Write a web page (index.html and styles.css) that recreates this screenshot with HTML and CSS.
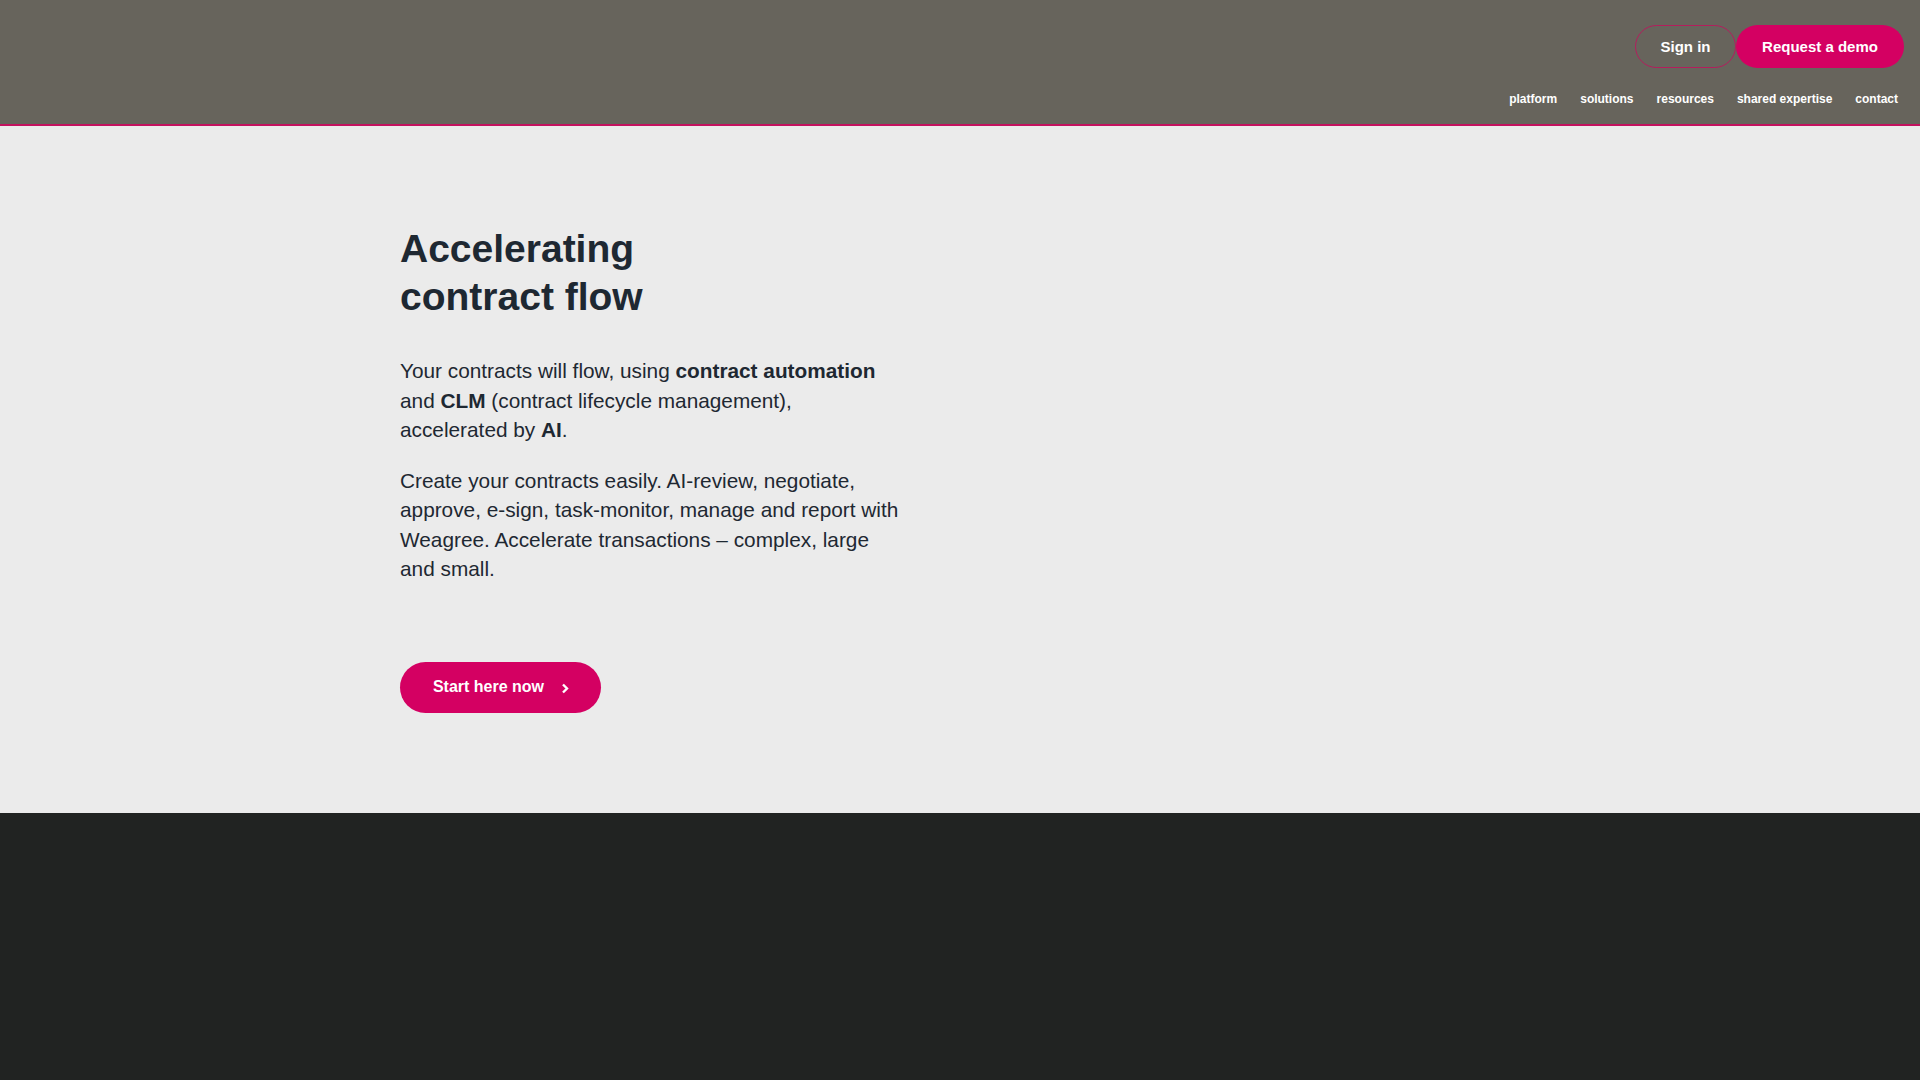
FILE: index.html
```html
<!doctype html>
<html>
<head>
<meta charset="utf-8">
<title>Weagree - Accelerating contract flow</title>
<link rel="stylesheet" href="styles.css">
</head>

<body>
<header class="site-header">
    <div class="header-actions">
        <a href="#" class="btn btn-outline">Sign in</a>
        <a href="#" class="btn btn-solid">Request a demo</a>
    </div>
    <nav class="main-nav">
        <a href="#">platform</a>
        <a href="#">solutions</a>
        <a href="#">resources</a>
        <a href="#">shared expertise</a>
        <a href="#">contact</a>
    </nav>
</header>

<section class="hero">
    <div class="constr">
        <h1 class="hero-title">Accelerating contract flow</h1>
        <div class="hero-text">
            <p>Your contracts will flow, using <strong>contract automation</strong> and <strong>CLM</strong> (contract lifecycle management), accelerated by <strong>AI</strong>.</p>
            <p>Create your contracts easily. AI-review, negotiate, approve, e-sign, task-monitor, manage and report with Weagree. Accelerate transactions – complex, large and small.</p>
        </div>
        <a href="#" class="btn btn-solid btn-start">Start here now
            <svg class="chev" width="9" height="11" viewBox="0 0 9 11"><path d="M2 1.5l4 4-4 4" fill="none" stroke="#fff" stroke-width="2.4"/></svg>
        </a>
    </div>
</section>

<section class="dark-band"></section>
</body>
</html>
```

FILE: styles.css
```css
body { margin: 0; font: 16px/1.4 "Liberation Sans", Arial, sans-serif; background-color: #ebebeb; color: #1e2832; }
a { text-decoration: none; }

/* top bar */
.site-header { height: 126px; box-sizing: border-box; padding: 25px 16px 0 0; background-color: #67645c; border-bottom: 2px solid #c4125f; display: flex; flex-direction: column; align-items: flex-end; }
.header-actions { display: flex; }
.btn { display: inline-flex; align-items: center; justify-content: center; box-sizing: border-box; height: 43px; padding: 0 20px; border-radius: 22px; font-size: 15px; font-weight: bold; color: #fff; white-space: nowrap; }
.btn-outline { width: 101px; border: 1px solid #b41d5c; }
.btn-solid { background-color: #d40062; }
.header-actions .btn-solid { width: 168px; }
.main-nav { display: flex; gap: 23px; margin-top: 24px; padding-right: 6px; }
.main-nav a { font-size: 12px; font-weight: bold; line-height: 14px; color: #fff; }

/* hero */
.hero { padding: 99px 0 100px; }
.constr { max-width: 1120px; margin: 0 auto; }
.hero-title { width: 320px; margin: 0 0 35px; font-size: 39px; line-height: 48px; font-weight: bold; }
.hero-text { width: 505px; font-size: 20.8px; line-height: 29.5px; }
.hero-text p { margin: 0 0 21px; }
.hero-text p:last-child { margin-bottom: 0; }
.btn-start { margin-top: 78px; width: 201px; height: 51px; border-radius: 26px; font-size: 16px; padding: 0 0 0 2px; }
.btn-start .chev { margin-left: 17px; margin-top: 3px; }

.dark-band { height: 300px; background-color: #212322; }
```
